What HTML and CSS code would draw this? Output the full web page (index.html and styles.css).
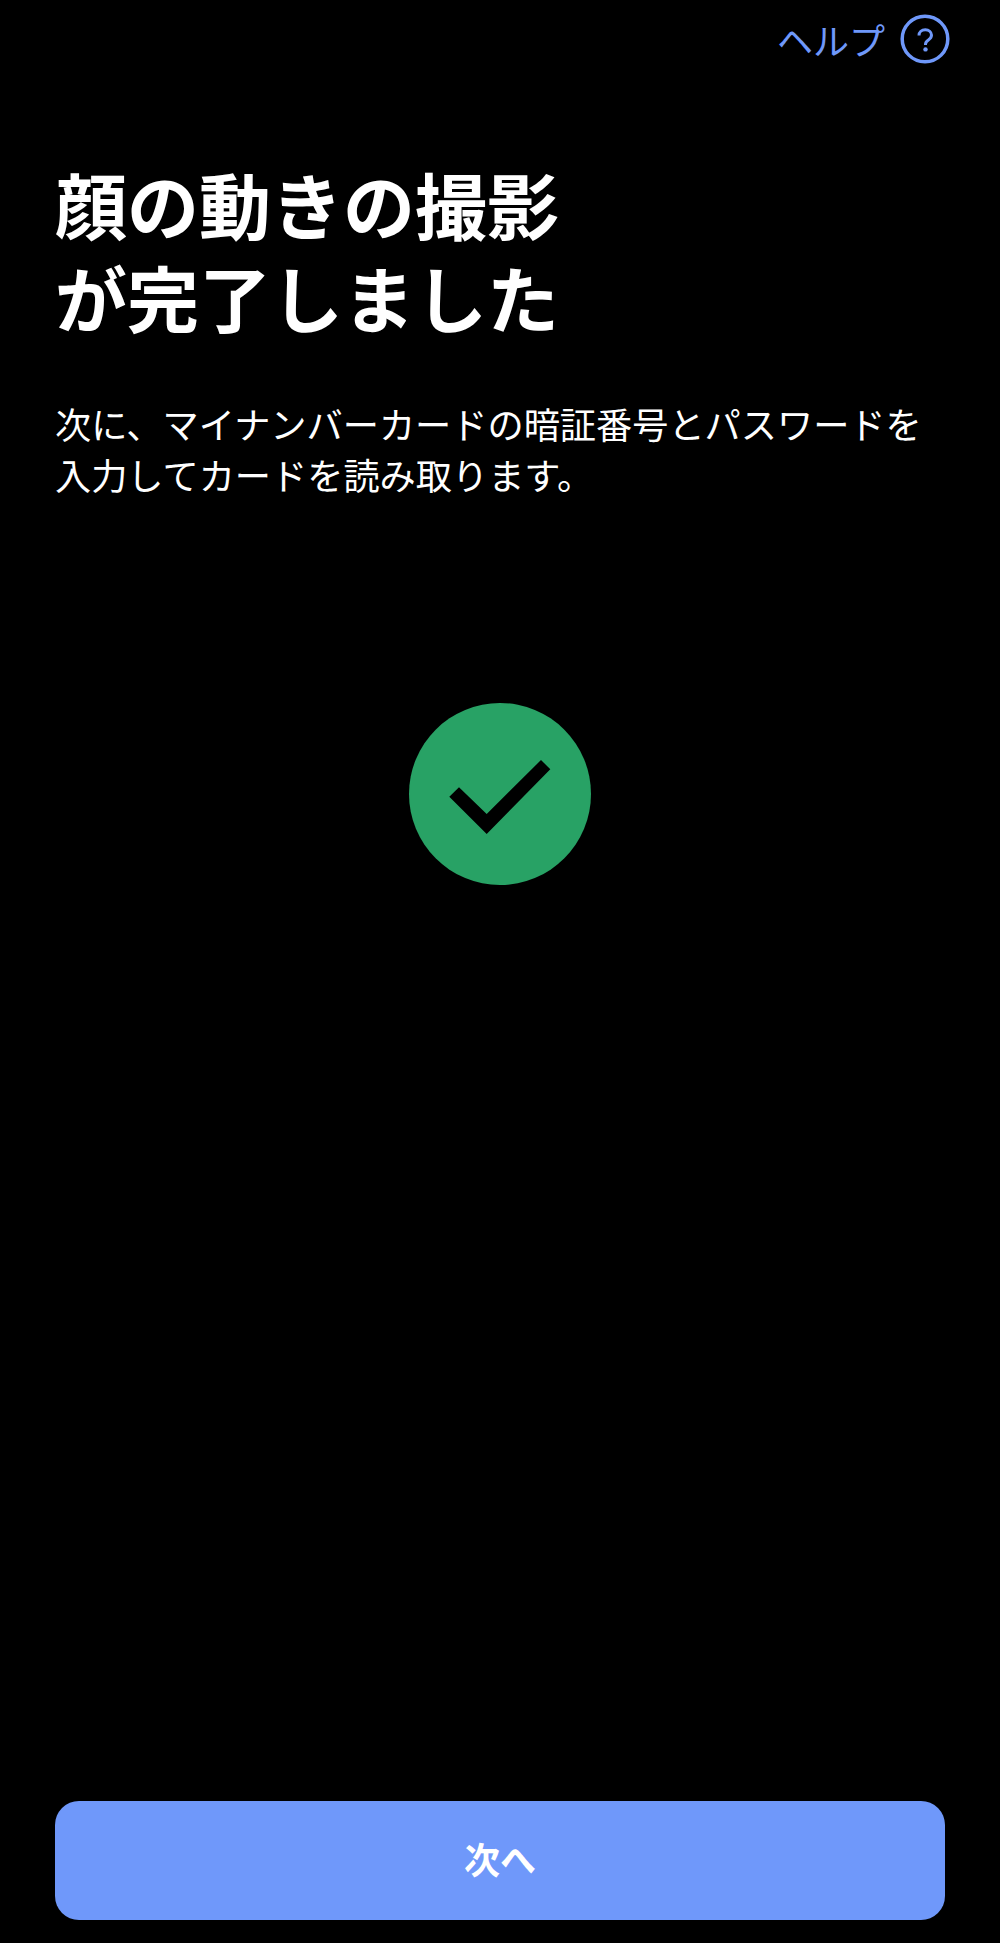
FILE: index.html
```html
<!DOCTYPE html>
<html lang="ja">
<head>
<meta charset="utf-8">
<title>顔の動きの撮影が完了しました</title>
<link rel="stylesheet" href="styles.css">
</head>
<body>
<main class="screen">
  <header class="topbar">
    <a class="help">
      <span class="help-label">ヘルプ</span>
      <svg class="help-icon" viewBox="0 0 50 50" aria-hidden="true">
        <circle cx="25" cy="25" r="22.800" fill="none" stroke="currentColor" stroke-width="3.500"/>
        <path d="M19 21.500c0-3.500 2.700-5.700 6.300-5.700 3.500 0 6.200 2.200 6.200 5.300 0 2.300-1.100 3.600-3.100 4.900-1.900 1.200-2.900 2.300-2.900 4.300v.6" fill="none" stroke="currentColor" stroke-width="3"/>
        <circle cx="25.500" cy="35.400" r="2.200" fill="currentColor"/>
      </svg>
    </a>
  </header>
  <section class="intro">
    <h1 class="title">顔の動きの撮影<br>が完了しました</h1>
    <p class="lead">次に、マイナンバーカードの暗証番号とパスワードを<br>入力してカードを読み取ります。</p>
  </section>
  <div class="status">
    <svg class="status-icon" viewBox="0 0 182 182" aria-hidden="true">
      <circle cx="91" cy="91" r="91" fill="#28a265"/>
      <path d="M40.300 93.700 50 84.300 77.700 111 132 57 141.300 66.300 77.700 131Z" fill="#000"/>
    </svg>
  </div>
  <button class="next" type="button">次へ</button>
</main>
</body>
</html>
```

FILE: styles.css
```css
* {
  box-sizing: border-box;
}

html,
body {
  margin: 0;
  background: #000;
}

.screen {
  display: flex;
  flex-direction: column;
  height: 1943px;
  padding: 0 55px 23px;
  color: #fff;
  font-family: "Noto Sans CJK JP", "Noto Sans", sans-serif;
}

.topbar {
  display: flex;
  justify-content: flex-end;
  margin-right: -5px;
  padding-top: 14px;
}

.help {
  display: flex;
  align-items: center;
  gap: 15px;
  color: #6f98fa;
}

.help-label {
  font-size: 36px;
  line-height: 50px;
}

.help-icon {
  display: block;
  width: 50px;
  height: 50px;
}

.intro {
  margin-top: 92px;
}

.title {
  margin: 0;
  font-size: 72px;
  font-weight: 700;
  line-height: 93px;
}

.lead {
  margin: 56px 0 0;
  font-size: 36.200px;
  font-weight: 400;
  line-height: 51px;
}

.status {
  display: flex;
  justify-content: center;
  margin-top: 203px;
}

.status-icon {
  display: block;
  width: 182px;
  height: 182px;
}

.next {
  width: 890px;
  height: 119px;
  margin-top: auto;
  padding: 0 0 6px;
  border: 0;
  border-radius: 24px;
  background: #6f98fa;
  color: #fff;
  font: 700 36px/1 "Noto Sans CJK JP", "Noto Sans", sans-serif;
}
```
